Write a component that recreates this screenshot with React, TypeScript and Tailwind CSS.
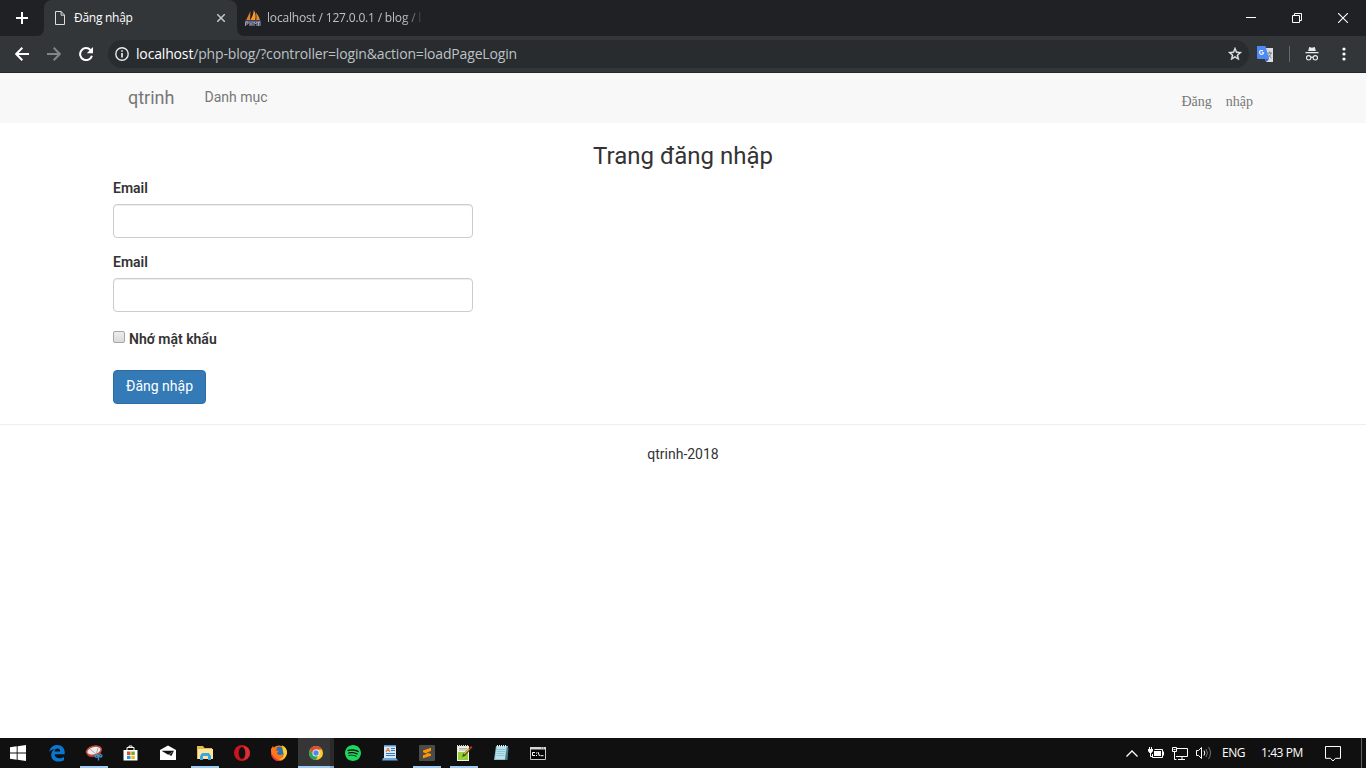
import type { ReactNode } from 'react';
import { SiSpotify } from 'react-icons/si';

const UI = "font-['Open_Sans','Noto_Sans',sans-serif]";

function TabStrip() {
  return (
    <div className="flex h-9 items-stretch bg-[#202124] text-white">
      <div className="flex w-[37px] shrink-0 items-center pl-4">
        <svg width="12" height="12" viewBox="0 0 12 12" stroke="#fff" strokeWidth="2">
          <path d="M6 0v12M0 6h12" />
        </svg>
      </div>
      <svg className="shrink-0 self-end" width="7" height="8" viewBox="0 0 7 8">
        <path d="M7 0v8H0C4 8 7 5 7 0Z" fill="#323639" />
      </svg>
      <div className="flex w-[193px] shrink-0 items-center rounded-t-lg bg-[#323639] pr-3 pl-[11px]">
        <svg width="10" height="14" viewBox="0 0 10 14" fill="none" stroke="#dadce0">
          <path d="M.5.5h5.700l3.300 3.600v9.400h-9zM6.100.5v3.700h3.400" />
        </svg>
        <span className={`${UI} ml-[9px] flex-1 text-[12px] leading-4 tracking-[-0.28px] whitespace-nowrap`}>Đăng nhập</span>
        <svg width="8" height="8" viewBox="0 0 8 8" stroke="#c5c8cb" strokeWidth="1.500">
          <path d="m0 0 8 8M8 0 0 8" />
        </svg>
      </div>
      <svg className="shrink-0 self-end" width="7" height="8" viewBox="0 0 7 8">
        <path d="M0 0v8h7C3 8 0 5 0 0Z" fill="#323639" />
      </svg>
      <div className="flex flex-1 items-center pl-px">
        <svg width="16" height="16" viewBox="0 0 16 16">
          <path d="M5.500 1 5 10H1.200Z" fill="#d98429" />
          <path d="M8.800 0c2 3 2.200 7 1.400 10H5.400C7 7 8.600 4 8.800 0Z" fill="#f79a2b" />
          <path d="M10.800 2.500c2 2 3.600 5 4 7.500h-3.500c.3-2.500.2-5-.5-7.500Z" fill="#e6902d" />
          <path d="M0 10.500h16l-1 2H1z" fill="#62618d" />
          <path d="M.5 16v-4h2.500v2H1M5 12v4m0-2h2M7 12v4m2 0v-4l1.500 2L12 12v4m1.500 0v-4H15v4" fill="none" stroke="#aeadd0" strokeWidth=".9" />
        </svg>
        <span className={`${UI} ml-[6px] w-fit text-[12px] leading-4 tracking-[-0.18px] whitespace-nowrap text-[#bdc1c6] [mask-image:linear-gradient(to_right,#000_136px,transparent_158px)]`}>
          localhost / 127.0.0.1 / blog / l
        </span>
      </div>
      <div className="mr-[18px] flex items-center gap-9">
        <svg width="10" height="10" viewBox="0 0 10 10" stroke="#fff"><path d="M0 4.500h10" /></svg>
        <svg width="10" height="10" viewBox="0 0 10 10" stroke="#fff" fill="none">
          <path d="M.5 2.500h7v7h-7zM2.500 2.500v-2h7v7h-2" />
        </svg>
        <svg width="10" height="10" viewBox="0 0 10 10" stroke="#fff" strokeWidth="1.100"><path d="m0 0 10 10M10 0 0 10" /></svg>
      </div>
    </div>
  );
}

function Toolbar() {
  return (
    <div className="flex h-[37px] items-center border-b border-[#25282b] bg-[#323639]">
      <svg className="ml-[15px] shrink-0" width="14" height="14" viewBox="0 0 14 14" fill="none" stroke="#fff" strokeWidth="2">
        <path d="M14 7H1.500M7.300.8 1.200 7l6.100 6.200" />
      </svg>
      <svg className="ml-[18px] shrink-0" width="14" height="14" viewBox="0 0 14 14" fill="none" stroke="#82868a" strokeWidth="2">
        <path d="M0 7h12.500M6.700.8 12.800 7l-6.100 6.200" />
      </svg>
      <svg className="ml-[18px] shrink-0" width="14" height="14" viewBox="0 0 14 14">
        <path d="M12.900 8.700A6 6 0 1 1 11.500 3" fill="none" stroke="#fff" strokeWidth="2" />
        <path d="M14 0v6.200H7.800Z" fill="#fff" />
      </svg>
      <div className="ml-[15px] flex h-7 flex-1 items-center rounded-full bg-[#282c2f] pr-[6px] pl-[7px]">
        <svg className="shrink-0" width="14" height="14" viewBox="0 0 14 14" fill="none" stroke="#e8eaed" strokeWidth="1.400">
          <circle cx="7" cy="7" r="6.200" />
          <path d="M7 6v4.500M7 3.300v1.500" strokeWidth="1.700" />
        </svg>
        <span className={`${UI} ml-[7px] flex-1 text-[14px] leading-5 tracking-[-0.16px] whitespace-nowrap text-[#bdc1c6]`}>
          <span className="text-white">localhost</span>/php-blog/?controller=login&amp;action=loadPageLogin
        </span>
        <svg width="16" height="16" viewBox="0 0 24 24" fill="#e8eaed">
          <path d="m22 9.240-7.190-.62L12 2 9.190 8.630 2 9.240l5.460 4.730L5.820 21 12 17.270 18.180 21l-1.630-7.030zM12 15.400l-3.760 2.270 1-4.280-3.320-2.880 4.380-.38L12 6.100l1.710 4.040 4.380.38-3.320 2.880 1 4.280z" stroke="#e8eaed" strokeWidth=".6" />
        </svg>
      </div>
      <svg className="ml-2 shrink-0" width="16" height="16" viewBox="0 0 16 16">
        <path d="M6 2h10v14H9z" fill="#dadce0" />
        <path d="M8 13h4l-2.500 3z" fill="#3267d6" />
        <path d="M0 0h8.500l3.600 13H1a1 1 0 0 1-1-1z" fill="#4c8bf5" />
        <path d="M6 5A2 2 0 1 0 6.600 6.700H4.800" fill="none" stroke="#fff" strokeWidth="1.100" />
        <path d="M10.500 7H15M12.700 5.500V7M14 7c-.5 2-1.500 3.500-3 4.500M11.500 8.500c.7 1.500 1.700 2.500 3 3.500" fill="none" stroke="#667680" strokeWidth=".9" />
      </svg>
      <div className="ml-4 h-4 w-px bg-[#66696c]" />
      <svg className="ml-[15px] shrink-0" width="14" height="14" viewBox="0 0 14 14">
        <path d="M4.200 0 7 .7 9.800 0l1 4H3.200zM.5 5h13v1.300H.5z" fill="#e8eaed" />
        <g fill="none" stroke="#e8eaed" strokeWidth="1.100"><circle cx="3.700" cy="10.800" r="2.200" /><circle cx="10.300" cy="10.800" r="2.200" /><path d="M5.900 10.500q1.100-.7 2.200 0" /></g>
      </svg>
      <svg className="mr-5 ml-[23px] shrink-0" width="4" height="14" viewBox="0 0 4 14" fill="#fff">
        <circle cx="2" cy="2" r="1.600" /><circle cx="2" cy="7" r="1.600" /><circle cx="2" cy="12" r="1.600" />
      </svg>
    </div>
  );
}

function Page() {
  return (
    <div className="flex-1 bg-white font-[Roboto,sans-serif] text-[14px] leading-5 text-[#333]">
      <nav className="flex h-[50px] bg-[#f8f8f8] px-[113px] text-[#777]">
        <a className="px-[15px] py-[15px] text-[18px]">qtrinh</a>
        <a className="py-[14px] pl-[15px]">Danh mục</a>
        <div className="ml-auto flex gap-[14px] pt-[19px] font-['Liberation_Serif',serif]">
          <a>Đăng</a>
          <a>nhập</a>
        </div>
      </nav>
      <main className="px-[113px]">
        <h3 className="pt-5 pb-[9px] text-center text-[24px] leading-[26px]">Trang đăng nhập</h3>
        <form className="flex flex-col items-start">
          {['email', 'password'].map((name) => (
            <label key={name} className="mb-[14px] flex flex-col gap-[6px] font-semibold">
              <span>Email</span>
              <input
                name={name}
                className="h-[34px] w-[360px] rounded border border-[#ccc] px-3 shadow-[inset_0_1px_1px_rgba(0,0,0,0.075)] outline-none"
              />
            </label>
          ))}
          <label className="mt-[3px] flex font-semibold">
            <span className="mt-[2px] mr-1 h-3 w-3 shrink-0 rounded-[2px] border border-[#a6a6a6] bg-linear-to-b from-[#eee] to-[#dadada]" />
            Nhớ mật khẩu
          </label>
          <button type="button" className="mt-[21px] h-[34px] w-[93px] rounded border border-[#2e6da4] bg-[#337ab7] pb-[3px] text-white">
            Đăng nhập
          </button>
        </form>
      </main>
      <footer className="mt-5 border-t border-[#eee] pt-[19px] text-center">qtrinh-2018</footer>
    </div>
  );
}

function AppSlot({ children, open = false }: { children: ReactNode; open?: boolean }) {
  return (
    <div className="flex w-[37px] flex-col pl-[5px]">
      <div className="flex h-7 w-7 items-center justify-center">
        <svg width="18" height="18" viewBox="0 0 18 18" className="mt-[2px]">{children}</svg>
      </div>
      {open && <div className="h-[2px] w-7 bg-[#9ccbf5]" />}
    </div>
  );
}

function Taskbar() {
  return (
    <div className="flex h-[30px] bg-[#101010] text-white">
      <div className="flex w-[38px] pt-[6px] pl-[9px]">
        <svg width="18" height="18" viewBox="0 0 18 18"><path d="m1 3.300 6.700-1v6.200H1zM8.600 2.200 17 1v7.500H8.600zM1 9.400h6.700v6.300L1 14.700zM8.600 9.400H17V17l-8.400-1.200z" fill="#fff" /></svg>
      </div>
      <AppSlot>
        <path d="M1.300 8C2 3.300 5.300 1 9.300 1c4.700 0 7.400 3.300 7.400 7.300v2H6.500c.2 2.700 2.300 4 4.700 4 1.800 0 3.500-.5 4.800-1.300v3.200c-1.600.9-3.400 1.300-5.500 1.300-4.500 0-7.300-2.600-7.300-6.500 0-2.500 1.300-4.600 3.600-5.700C4.500 5.500 2.700 6.300 1.300 8Zm5.300-.6h5.600c0-2-1-3-2.700-3-1.600 0-2.700 1.200-2.900 3Z" fill="#0878d4" />
      </AppSlot>
      <AppSlot open>
        <ellipse cx="9" cy="6.700" rx="7.500" ry="4.300" transform="rotate(-15 9 7)" fill="#ededed" stroke="#c94b3f" strokeWidth="1.500" />
        <path d="M1.500 9.500c3 3 8 2.500 14-1.500l.5 1.500C11 14 3 14.500 1.500 9.500Z" fill="#c64036" />
        <path d="m5 5 7 6M13 4l-2 7" stroke="#9b9b9b" strokeWidth=".8" />
        <g stroke="#3b8fc9" strokeWidth="1.400" fill="none"><circle cx="11.500" cy="12" r="1.400" /><circle cx="15.700" cy="11.800" r="1.200" /><path d="M13.500 11v5.500" /></g>
      </AppSlot>
      <AppSlot>
        <path d="M1.500 6h14v10.500h-14z" fill="#fff" /><path d="M5 6V3.500h7V6M7 3.500V2h3v1.500" fill="none" stroke="#fff" />
        <path d="M5 7.500h3.500V11H5z" fill="#e64b27" /><path d="M9.300 7.500h3.500V11H9.300z" fill="#70ad28" /><path d="M5 11.800h3.500V15H5z" fill="#139ddb" /><path d="M9.300 11.800h3.500V15H9.300z" fill="#f6b51e" />
      </AppSlot>
      <AppSlot><path d="m1 6 8-4.500L17 6v10H1z" fill="#fff" /><path d="M2.500 6.800h13l-6.300 3.900z" fill="#101010" /><path d="m10 10.700 2.300 1.400 2.500-4.800" fill="#101010" /></AppSlot>
      <AppSlot open>
        <path d="M1 2h6l1.500 2H16v11H1z" fill="#e6b94e" /><path d="M2 5h15v10H2z" fill="#ffe49a" />
        <path d="M4 16v-4l2-3h7l2 3v4h-3v-4H7v4z" fill="#3ba9df" />
      </AppSlot>
      <AppSlot><circle cx="9" cy="9" r="8" fill="#c9151e" /><ellipse cx="9" cy="9" rx="3.300" ry="6" fill="#101010" /><path d="M10 2.700c3 .8 4 11.500 0 12.600 2 1 7-1 7-6.300s-5-7.300-7-6.300Z" fill="#ed4850" fillOpacity=".5" /></AppSlot>
      <AppSlot>
        <circle cx="9" cy="9.300" r="7.700" fill="#ff7a15" /><circle cx="9.300" cy="8.300" r="5.500" fill="#2871b5" />
        <path d="M1 5 3 2l1 2 3-.3-1 3h3L7 9c1 3 4 2 6 1 .5 4-4 6-8 4-4-2-4-6-4-9Z" fill="#ff7818" />
        <path d="M12 1.300c4 1.500 6.500 6 4.300 10-1.500 3.600-5 4.800-7.300 4.300 4-1 5.500-3.600 4-8Z" fill="#ffcd29" /><path d="M1 8c-.2 4.500 2.500 8.500 7 9l3-.4C6 15.500 3 13 1 8Z" fill="#eb2b52" />
      </AppSlot>
      <div className="ml-px flex w-9 flex-col border-r-4 border-[#2a2a2a] bg-[#363636]">
        <div className="flex h-7 items-center pl-[9px]">
          <svg width="18" height="18" viewBox="0 0 18 18" className="mt-[2px] shrink-0">
            <circle cx="9" cy="9" r="7" fill="#fbcd2d" />
            <path d="M2.940 5.500A7 7 0 0 1 15.060 5.500H9L6 11Z" fill="#de4b3b" />
            <path d="M2.940 5.500 6 11l5 .5-2 4.500A7 7 0 0 1 2.940 5.500Z" fill="#2ba15a" />
            <circle cx="9" cy="9" r="3.500" fill="#fff" /><circle cx="9" cy="9" r="2.700" fill="#4b88ed" />
          </svg>
        </div>
        <div className="-mr-1 h-[2px] bg-linear-to-r from-[#9ccbf5] from-[89%] to-[#84acd0] to-[89%]" />
      </div>
      <AppSlot><SiSpotify x="1" y="1" width="16" height="16" color="#1ed760" /></AppSlot>
      <AppSlot>
        <path d="M3 1h12v13H3z" fill="#d5e9fa" /><path d="m2 14-1 2.500h16L15 14z" fill="#6ca5d5" /><path d="M3 1h12v1.500H3z" fill="#4b93d1" />
        <path d="m5 8 2-4 2 4M6 6.500h2" stroke="#e37525" fill="none" /><path d="M10 4.500h4M10 6.500h4M5 9.500h9M5 11.500h9" stroke="#3e79b0" />
      </AppSlot>
      <AppSlot open><rect x="1" y="1" width="16" height="16" rx="1" fill="#4a4a4a" /><path d="m5 6.500 8-2.700V7L8.500 8.500 13 9.900v1.800L5 14.300v-3.100l4.500-1.400L5 8.300z" fill="#ff9800" /></AppSlot>
      <AppSlot open>
        <path d="M2 2h12v15H2z" fill="#f1f1df" /><path d="M3 8h10v8H3z" fill="#96cf39" /><path d="M2 2h12" stroke="#ddd" strokeWidth="2" strokeDasharray="1 1" />
        <path d="M4 4.500h8M4 6h8" stroke="#999" strokeWidth=".7" /><path d="m7 13 1-3 6-6 2 1-6 7z" fill="#41521c" /><path d="m9 10 5-5" stroke="#e9bc3a" strokeWidth="1.200" /><path d="m14 4 2-2 1.500 1.500-2 1.500z" fill="#d92d25" />
      </AppSlot>
      <AppSlot>
        <path d="M4 2h12l-1 14H2z" fill="#86c1d1" /><path d="M5 3h9l-1 12H3z" fill="#b9e2eb" /><path d="M5 5.500h8M5 7.500h8M4.500 9.500h8M4.500 11.500h8" stroke="#83b7c5" strokeWidth=".7" />
        <path d="M5 2h10" stroke="#eee" strokeWidth="2" strokeDasharray="1 1" /><path d="m15 3 1.500 1-1 12H13z" fill="#4b7683" />
      </AppSlot>
      <AppSlot>
        <path d="M1.500 3.500h15v12h-15z" fill="#050505" stroke="#c7c7c7" /><path d="M1 3h16v2.500H1z" fill="#d7d7d7" /><path d="M12 4h1m1 0h1" stroke="#3d668a" />
        <path d="M6 8.500H3.500v3H6M7.500 8.500v1m0 1.500v1M9 8l1.500 4M11.500 11.700h3" fill="none" stroke="#fff" />
      </AppSlot>
      <div className={`${UI} ml-auto flex items-center text-[12px] leading-4`}>
        <svg width="12" height="7" viewBox="0 0 12 7" fill="none" stroke="#fff" strokeWidth="1.300"><path d="m.5 6.500 5.500-5.500 5.500 5.500" /></svg>
        <svg className="ml-[10px]" width="16" height="12" viewBox="0 0 16 12">
          <path d="M1.500 0v2M3.500 0v2M2.500 5v4.500h2" stroke="#fff" fill="none" /><path d="M0 2h5v2L3.500 6h-2L0 4z" fill="#fff" /><path d="M6.500 2.500h8v8h-10V7M15.500 4.500v4" fill="none" stroke="#fff" /><path d="M6 4h7v5H6z" fill="#fff" />
        </svg>
        <svg className="mt-[2px] ml-2" width="16" height="14" viewBox="0 0 16 14" fill="none" stroke="#fff">
          <path d="M5 1.500h10.500v8H4M10 9.500v3M6 12.500h7M.5.5h4v4h-4zM2.500 4.500v8h2" /><path d="M1.500 2.500h2" />
        </svg>
        <svg className="ml-2" width="16" height="14" viewBox="0 0 16 14" fill="none" stroke="#fff">
          <path d="M.5 4.500h2L5.500 1.500v11L2.500 9.500h-2zM8 4.500q1.500 2.500 0 5" /><path d="M10 3q3 4 0 8M12.500 1q4 6 0 12" stroke="#727272" />
        </svg>
        <span className="ml-[10px] w-6 tracking-[-0.45px]">ENG</span>
        <span className="ml-[15px] w-[42px] tracking-[-0.42px] whitespace-nowrap">1:43 PM</span>
        <svg className="mt-[2px] mr-5 ml-[22px]" width="16" height="16" viewBox="0 0 16 16" fill="none" stroke="#fff"><path d="M.5.5h15v11.800h-5L8 15l-2.500-2.700h-5z" /></svg>
        <div className="mr-1 h-[30px] w-px bg-[#606060]" />
      </div>
    </div>
  );
}

export default function App() {
  return (
    <div className="flex h-screen w-full flex-col overflow-hidden bg-white">
      <TabStrip />
      <Toolbar />
      <Page />
      <Taskbar />
    </div>
  );
}
